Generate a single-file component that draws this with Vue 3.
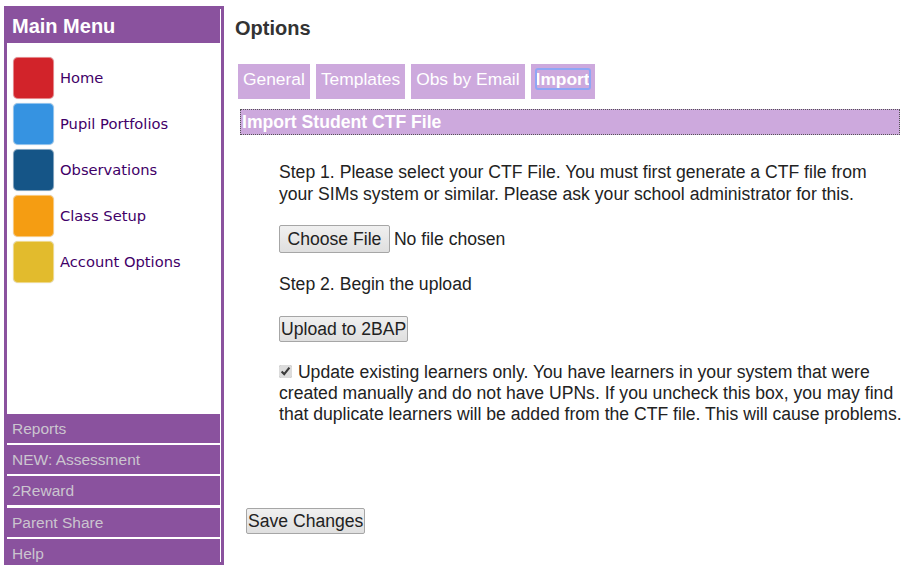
<template>
  <div class="page">
    <!-- Left menu -->
    <aside class="sidebar">
      <div class="sidebar-inner">
        <h2 class="menu-title">Main Menu</h2>
        <ul class="menu">
          <li v-for="item in menuItems" :key="item.label" class="menu-item">
            <span class="menu-icon" :style="{ background: item.color }"></span>
            <a href="#" class="menu-link">{{ item.label }}</a>
          </li>
        </ul>
        <div class="sections">
          <a v-for="section in sections" :key="section" href="#" class="section-link">{{ section }}</a>
        </div>
      </div>
    </aside>

    <!-- Options panel -->
    <main class="content">
      <h1 class="title">Options</h1>
      <nav class="tabs">
        <div v-for="tab in tabs" :key="tab" class="tab" :class="{ active: tab === activeTab }">
          <a href="#" class="tab-link" @click.prevent="activeTab = tab">{{ tab }}</a>
        </div>
      </nav>
      <h3 class="panel-header">Import Student CTF File</h3>

      <div class="panel-body">
        <p class="step-one">
          Step 1. Please select your CTF File. You must first generate a CTF file from
          your SIMs system or similar. Please ask your school administrator for this.
        </p>
        <input type="file" class="file-input">
        <p class="step-two">Step 2. Begin the upload</p>
        <button type="button" class="btn upload-btn">Upload to 2BAP</button>
        <label class="update-only">
          <input v-model="updateOnly" type="checkbox" class="update-check">
          Update existing learners only. You have learners in your system that were
          created manually and do not have UPNs. If you uncheck this box, you may find
          that duplicate learners will be added from the CTF file. This will cause problems.
        </label>
      </div>

      <button type="button" class="btn save-btn">Save Changes</button>
    </main>
  </div>
</template>

<script setup>
import { ref } from 'vue'

const menuItems = [
  { label: 'Home', color: '#d2232a' },
  { label: 'Pupil Portfolios', color: '#3693e1' },
  { label: 'Observations', color: '#155587' },
  { label: 'Class Setup', color: '#f59d12' },
  { label: 'Account Options', color: '#e2bb2d' }
]

const sections = ['Reports', 'NEW: Assessment', '2Reward', 'Parent Share', 'Help']
const tabs = ['General', 'Templates', 'Obs by Email', 'Import']

const activeTab = ref('Import')
const updateOnly = ref(true)
</script>

<style scoped>
.page {
  display: flex;
  align-items: flex-start;
  height: 570px;
  overflow: hidden;
  font-family: "Liberation Sans", Arial, sans-serif;
  color: #222;
}

.sidebar {
  width: 220px;
  height: 559px;
  margin: 6px 0 0 4px;
  padding: 3px;
  box-sizing: border-box;
  background: #8a529e;
  flex-shrink: 0;
}

.sidebar-inner {
  display: flex;
  flex-direction: column;
  height: 100%;
  border-right: 1px solid #fff;
}

.menu-title {
  height: 34px;
  margin: 0;
  padding: 0 5px;
  color: #fff;
  font-size: 20px;
  line-height: 34px;
  font-weight: bold;
}

.menu {
  flex: 1;
  margin: 0;
  padding: 12px 0 0 6px;
  list-style: none;
  background: #fff;
}

.menu-item {
  display: flex;
  align-items: center;
  gap: 6px;
  height: 46px;
}

.menu-icon {
  width: 41px;
  height: 42px;
  box-sizing: border-box;
  border: 1px solid rgba(255, 255, 255, 0.45);
  border-radius: 5px;
  background-clip: padding-box;
  box-shadow: 0 0 1px rgba(0, 0, 0, 0.25);
}

.menu-link {
  margin-bottom: 2px;
  color: #3f0068;
  font-family: "DejaVu Sans", Verdana, sans-serif;
  font-size: 14.7px;
  text-decoration: none;
}

.sections {
  display: flex;
  flex-direction: column;
  gap: 2.33px;
  background: #fff;
}

.section-link {
  height: 29px;
  padding: 0 5px;
  background: #8a529e;
  color: #cbc5cf;
  font-size: 15.5px;
  line-height: 29px;
  text-decoration: none;
}

.section-link:last-child {
  height: 23px;
}

.content {
  flex: 1;
  padding: 0 0 0 11px;
}

.title {
  margin: 16px 0 0;
  color: #333;
  font-size: 20px;
  line-height: 24px;
  font-weight: bold;
}

.tabs {
  display: flex;
  gap: 6px;
  margin: 24px 0 0 3px;
}

.tab {
  height: 35px;
  padding: 5px;
  box-sizing: border-box;
  background: #cda9dd;
  font-size: 17.4px;
  line-height: 20px;
}

.tab-link {
  display: block;
  color: #fff;
  text-decoration: none;
}

.tab.active .tab-link {
  font-weight: bold;
  outline: 2px solid #8ea6f5;
  outline-offset: -1px;
  border-radius: 2px;
}

.panel-header {
  width: 660px;
  height: 26px;
  margin: 10px 0 0 5px;
  padding: 0 1px;
  box-sizing: border-box;
  border: 1px dotted #555;
  background: #cda9dd;
  color: #fff;
  font-size: 17.6px;
  line-height: 24px;
  font-weight: bold;
}

.panel-body {
  width: 630px;
  margin-left: 44px;
  font-size: 17.6px;
}

.step-one {
  width: 612px;
  margin: 26px 0 0;
  line-height: 22px;
}

.file-input {
  display: block;
  width: 300px;
  margin-top: 20px;
  color: #222;
  font-family: inherit;
  font-size: 17.6px;
}

.file-input::file-selector-button {
  height: 28px;
  margin-right: 4px;
  padding: 0 7.5px;
  border: 1px solid #a6a6a6;
  border-radius: 2px;
  background: linear-gradient(#f0f0f0, #dfdfdf);
  color: #222;
  font-family: inherit;
  font-size: 17.6px;
}

.step-two {
  margin: 20px 0 0;
  line-height: 22px;
}

.btn {
  display: block;
  height: 26px;
  padding: 0 1px;
  border: 1px solid #a6a6a6;
  border-radius: 2px;
  background: linear-gradient(#f0f0f0, #dfdfdf);
  color: #222;
  font-family: inherit;
  font-size: 17.6px;
  line-height: 22px;
}

.upload-btn {
  margin-top: 21px;
}

.update-only {
  display: block;
  margin-top: 20px;
  line-height: 21px;
}

.update-check {
  width: 13px;
  height: 13px;
  margin: 0 1px 1px 0;
  accent-color: #dcdcdc;
}

.save-btn {
  margin: 83px 0 0 11px;
}
</style>

<style>
html, body {
  margin: 0;
  overflow: hidden;
  background: #fff;
}
</style>
